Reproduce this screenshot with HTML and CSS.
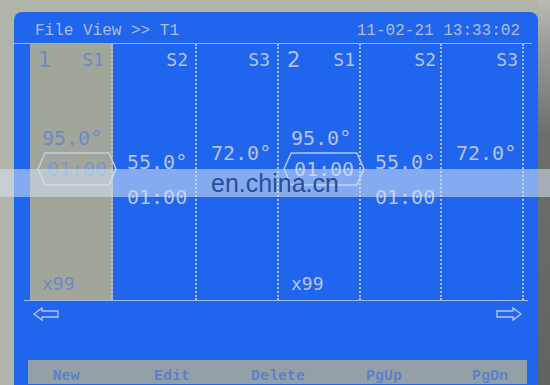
FILE: index.html
```html
<!DOCTYPE html>
<html lang="en">

<head>
    <meta charset="UTF-8">
    <meta name="viewport" content="width=device-width, initial-scale=1.0">
    <title>File View</title>
    <link rel="stylesheet" href="styles.css">
</head>

<body>
    <div id="frame">
        <div id="screen">
            <div class="title">
                <span>File View &gt;&gt; T1</span>
                <span>11-02-21 13:33:02</span>
            </div>

            <div class="groups">
                <!-- 第一组 -->
                <div class="group g1">
                    <div class="col sel">
                        <div class="head split"><span class="num">1</span><span>S1</span></div>
                        <div class="val v95">95.0&deg;</div>
                        <div class="box">
                            <svg viewBox="0 0 80 34" preserveAspectRatio="none"><polygon points="8,1 72,1 79,17 72,33 8,33 1,17" /></svg>
                            <span>01:00</span>
                        </div>
                        <div class="count">x99</div>
                    </div>
                    <div class="col">
                        <div class="head">S2</div>
                        <div class="val v55">55.0&deg;</div>
                        <div class="val sub">01:00</div>
                    </div>
                    <div class="col">
                        <div class="head">S3</div>
                        <div class="val v72">72.0&deg;</div>
                    </div>
                </div>
                <!-- 第二组 -->
                <div class="group g2">
                    <div class="col">
                        <div class="head split"><span class="num">2</span><span>S1</span></div>
                        <div class="val v95">95.0&deg;</div>
                        <div class="box">
                            <svg viewBox="0 0 80 34" preserveAspectRatio="none"><polygon points="8,1 72,1 79,17 72,33 8,33 1,17" /></svg>
                            <span>01:00</span>
                        </div>
                        <div class="count">x99</div>
                    </div>
                    <div class="col">
                        <div class="head">S2</div>
                        <div class="val v55">55.0&deg;</div>
                        <div class="val sub">01:00</div>
                    </div>
                    <div class="col">
                        <div class="head">S3</div>
                        <div class="val v72">72.0&deg;</div>
                    </div>
                </div>
            </div>

            <div class="nav">
                <svg class="arrow" viewBox="0 0 26 14"><path d="M1 7 L9 1 L9 4 L25 4 L25 10 L9 10 L9 13 Z" /></svg>
                <svg class="arrow" viewBox="0 0 26 14"><path d="M25 7 L17 1 L17 4 L1 4 L1 10 L17 10 L17 13 Z" /></svg>
            </div>

            <div class="keys">
                <ul class="keys-row">
                    <li>New</li>
                    <li>Edit</li>
                    <li>Delete</li>
                    <li>PgUp</li>
                    <li>PgDn</li>
                </ul>
            </div>
        </div>
        <div id="bezel-r"></div>
    </div>

    <div id="mark">en.china.cn</div>
</body>

</html>
```

FILE: styles.css
```css
* {
    margin: 0;
    padding: 0;
}

ul {
    list-style: none;
}

body {
    width: 550px;
    height: 385px;
    overflow: hidden;
    background: #b1b4a9;
    position: relative;
}

#frame {
    display: flex;
    height: 385px;
    padding-left: 14px;
}

#screen {
    width: 524px;
    margin-top: 12px;
    height: 373px;
    background: #2065ee;
    border-radius: 8px 8px 0 0;
    display: flex;
    flex-direction: column;
    color: #b4c3ea;
}

#bezel-r {
    width: 12px;
    background: linear-gradient(#b9bab2 0, #9a9d97 12%, #6b706b 35%, #5f645f 100%);
}

/* 标题栏 */

.title {
    display: flex;
    justify-content: space-between;
    margin-right: 6px;
    padding: 9px 12px 2px 21px;
    line-height: 20px;
    height: 20px;
    font-family: "Liberation Mono", monospace;
    font-size: 16px;
    color: #adbbe2;
    border-bottom: 1px solid #9fb5ea;
}

/* 数据区 */

.groups {
    display: flex;
    margin-left: 16px;
    height: 256px;
}

.group {
    display: grid;
}

.g1 {
    grid-template-columns: 83px 84px 82px;
}

.g2 {
    grid-template-columns: 82px 81px 82px;
}

.col {
    display: flex;
    flex-direction: column;
    padding: 6px 0 6px 0;
    border-right: 2px dotted #a9bef0;
    font-family: "DejaVu Sans Mono", monospace;
}

.col.sel {
    background: #a0a79a;
    color: #6d89c6;
}

.g2 .col:first-child {
    border-left: 0;
}

.head {
    font-size: 18px;
    line-height: 20px;
    text-align: right;
    padding-right: 7px;
}

.g2 .head {
    padding-right: 4px;
}

.head.split {
    display: flex;
    justify-content: space-between;
    padding-left: 8px;
}

.num {
    font-family: "DejaVu Sans", sans-serif;
    font-size: 21px;
}

.val {
    font-size: 20px;
    line-height: 20px;
    padding-left: 12px;
    white-space: nowrap;
}

.v95 {
    margin-top: 58px;
}

.v55 {
    margin-top: 82px;
    padding-left: 14px;
}

.v72 {
    margin-top: 73px;
    padding-left: 14px;
}

.sub {
    margin-top: 15px;
    padding-left: 14px;
}

.box {
    position: relative;
    width: 80px;
    height: 34px;
    margin: 4px 0 0 7px;
    font-size: 20px;
    line-height: 34px;
    text-align: center;
}

.g2 .box {
    width: 82px;
    margin-left: 4px;
}

.box svg {
    position: absolute;
    left: 0;
    top: 0;
    width: 100%;
    height: 100%;
    fill: none;
    stroke: currentColor;
    stroke-width: 1.5;
}

.sel .box {
    color: #7c96cc;
}

.sel .box svg {
    stroke: #c4cde0;
}

.count {
    margin-top: auto;
    font-size: 18px;
    line-height: 20px;
    padding-left: 12px;
}

/* 翻页箭头 */

.nav {
    display: flex;
    justify-content: space-between;
    margin-left: 10px;
    width: 504px;
    height: 60px;
    padding: 6px 6px 0 9px;
    box-sizing: border-box;
    border-top: 1px solid #a4baee;
}

.arrow {
    width: 26px;
    height: 14px;
    fill: none;
    stroke: #b4c3ea;
    stroke-width: 1.4;
}

/* 底部按键 */

.keys {
    margin-left: 14px;
    width: 499px;
    height: 24px;
    background: #95a0a6;
    overflow: hidden;
}

.keys-row {
    display: grid;
    grid-template-columns: repeat(5, 106px);
    margin-left: -15px;
    padding-top: 5px;
    line-height: 24px;
    font-family: "Liberation Mono", monospace;
    font-size: 15px;
    font-weight: bold;
    color: #5a80cc;
    text-align: center;
}

/* 水印 */

#mark {
    position: absolute;
    left: 0;
    top: 169px;
    width: 550px;
    height: 28px;
    line-height: 28px;
    background: rgba(215, 228, 245, 0.55);
    font-family: "Liberation Sans", Arial, sans-serif;
    font-size: 25px;
    color: #2d4c96;
    text-align: center;
}
```
